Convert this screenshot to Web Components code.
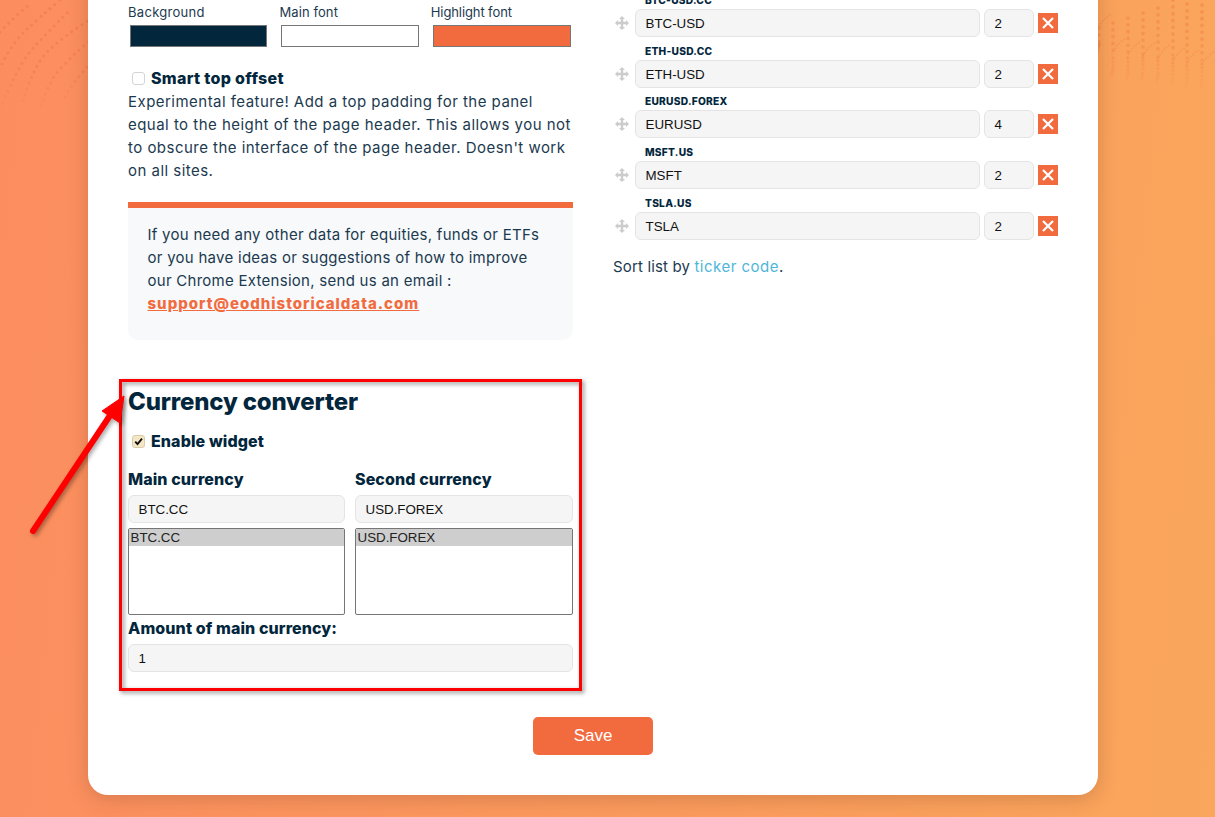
<!DOCTYPE html>
<html lang="en"><head><meta charset="utf-8"><title>Settings</title>
<style>
html,body{margin:0;height:817px;overflow:hidden}
body{font-family:Inter,"Liberation Sans",sans-serif;color:#02263c}
</style></head><body>
<x-page>
  <x-card>
    <x-columns>
      <div slot="left">
        <x-colors></x-colors>
        <x-check>Smart top offset</x-check>
        <x-text><span>Experimental feature! Add a top padding for the panel</span><span>equal to the height of the page header. This allows you not</span><span>to obscure the interface of the page header. Doesn't work</span><span>on all sites.</span></x-text>
        <x-notice></x-notice>
        <x-converter></x-converter>
      </div>
      <div slot="right">
        <x-ticker code="BTC-USD.CC" name="BTC-USD" dec="2"></x-ticker>
        <x-ticker code="ETH-USD.CC" name="ETH-USD" dec="2"></x-ticker>
        <x-ticker code="EURUSD.FOREX" name="EURUSD" dec="4"></x-ticker>
        <x-ticker code="MSFT.US" name="MSFT" dec="2"></x-ticker>
        <x-ticker code="TSLA.US" name="TSLA" dec="2"></x-ticker>
        <x-sort></x-sort>
      </div>
    </x-columns>
    <x-save>Save</x-save>
  </x-card>
</x-page>
<script>
const FONT='Inter,"Liberation Sans",sans-serif';
function def(name,html){
  customElements.define(name,class extends HTMLElement{
    constructor(){super();this.attachShadow({mode:'open'});if(typeof html!=='function')this.shadowRoot.innerHTML=html;}
    connectedCallback(){
      if(typeof html==='function'&&!this._d){this._d=1;this.shadowRoot.innerHTML=html(this);}
    }
  });
}
function rightDeco(){
  const cols=[[1,28,52],[15,23,77],[30,18,80],[45,13,81],[60,8,83],[75,0,86],[89,4,88],[104,5,90]];
  let s='';
  cols.forEach(([x,t,b])=>{
    const m=Math.round(t+(b-t)*.62);
    s+=`<path d="M${x} ${t}V${m}" stroke-dasharray="0.01 6.8" stroke-linecap="round" stroke-width="3.7"/>`;
    s+=`<path d="M${x} ${m+2}V${b-10}" stroke-dasharray="0.01 3.9" stroke-linecap="round" stroke-width="3.3"/>`;
    s+=`<path d="M${x} ${b-9}L${x-1.5} ${b}" stroke-width="3"/>`;
    s+=`<path d="M${x-1} ${b-22}Q${x+2} ${b-32} ${x+12} ${b-38}" stroke-dasharray="1.6 1.6" stroke-width="1.6"/>`;
  });
  return s;
}
const leftDeco=['M0 32Q14 17 30 4','M2 64Q13 42 26 30T60 0','M0 108L10 87Q22 60 34 47Q45 35 70 10','M23 101Q32 70 46 53Q65 35 89 20','M41 106Q50 78 63 66Q78 50 90 41','M65 97Q73 82 90 64']
  .map(d=>`<path d="${d}" stroke-dasharray="0.01 6.2" stroke-linecap="round" stroke-width="3"/>`).join('');
def('x-page',`<style>
:host{display:block;position:relative;height:817px;overflow:hidden;background:linear-gradient(96deg,#fc8d5f 0%,#faa65c 100%)}
.wrap{padding-left:88px;width:1010px;margin-top:-40px;position:relative}
.deco{position:absolute;top:0;pointer-events:none;fill:none}
.l{left:0}.r{left:1098px}
</style>
<svg class="deco l" width="88" height="140" viewBox="0 0 88 140"><defs><linearGradient id="lg" gradientUnits="userSpaceOnUse" x1="0" y1="20" x2="0" y2="115"><stop offset="0" stop-color="#ee6f42" stop-opacity=".42"/><stop offset=".55" stop-color="#ee6f42" stop-opacity=".36"/><stop offset="1" stop-color="#ee6f42" stop-opacity="0"/></linearGradient></defs><g stroke="url(#lg)">${leftDeco}</g></svg>
<svg class="deco r" width="117" height="100" viewBox="0 0 117 100"><defs><linearGradient id="rg" gradientUnits="userSpaceOnUse" x1="0" y1="0" x2="0" y2="92"><stop offset="0" stop-color="#f08048" stop-opacity=".55"/><stop offset=".55" stop-color="#f08048" stop-opacity=".42"/><stop offset="1" stop-color="#f08048" stop-opacity="0"/></linearGradient></defs><g stroke="url(#rg)">${rightDeco()}</g></svg>
<div class="wrap"><slot></slot></div>`);
def('x-card',`<style>
:host{display:block;background:#fff;border-radius:0 0 20px 20px;padding:40px;box-shadow:0 4px 20px rgba(90,40,20,.22);position:relative}
</style><slot></slot>`);
def('x-columns',`<style>
:host{display:grid;grid-template-columns:445px 445px;column-gap:40px;align-items:start}
::slotted([slot=right]){margin-top:-10px}
</style><slot name="left"></slot><slot name="right"></slot>`);
def('x-colors',`<style>
:host{display:grid;grid-template-columns:repeat(3,141.4px);column-gap:10px;font:13px/25px ${FONT};color:#1c3a4f;letter-spacing:.1px}
div{height:47px}
.s{display:block;height:22px;margin:0 0 0 2px;box-sizing:border-box;border:1px solid #767676;width:138px}
.t{display:block;height:25px}
</style>
<div><span class="t" style="letter-spacing:.3px">Background</span><span class="s" style="background:#02263c;width:137px"></span></div>
<div><span class="t">Main font</span><span class="s" style="background:#fff"></span></div>
<div><span class="t" style="letter-spacing:-.1px">Highlight font</span><span class="s" style="background:#f26b3f"></span></div>`);
def('x-check',el=>{const on=el.hasAttribute('checked');return `<style>
:host{display:flex;align-items:center;height:23px;font:800 16px/23px ${FONT};color:#02263c;letter-spacing:${on?'.1px':'.3px'};margin-top:${on?'0':'20px'}}
.b{width:13px;height:13px;box-sizing:border-box;margin:0 6px 0 4px;border-radius:3px;border:1px solid #d4d4d4;background:#fff;display:flex;flex:none}
.on{background:#f3e7c5;border-color:#d9ccaa}
svg{display:block}
</style><span class="b ${on?'on':''}">${on?'<svg width="11" height="11" viewBox="0 0 11 11"><path d="M2.2 5.6 4.5 8 9 2.6" fill="none" stroke="#111" stroke-width="1.9"/></svg>':''}</span><slot></slot>`});
def('x-text',`<style>
:host{display:block;font:400 15px/23px ${FONT};color:#1c3a4f;letter-spacing:.47px;margin-bottom:0;white-space:nowrap}
::slotted(span){display:block}
</style><slot></slot>`);
def('x-notice',`<style>
:host{display:block;margin-top:20px;border-top:6px solid #f26b3f;background:#f7f9fb;border-radius:0 0 10px 10px;padding:15px 20px 25px 19.5px;font:400 15px/23px ${FONT};color:#1c3a4f;letter-spacing:.27px}
a{display:block;color:#f26b3f;font-weight:800;text-decoration:underline;letter-spacing:1px}
</style>If you need any other data for equities, funds or ETFs or you have ideas or suggestions of how to improve our Chrome Extension, send us an email :<a href="#">support@eodhistoricaldata.com</a>`);
def('x-field',`<style>
:host{display:block;height:28px;box-sizing:border-box;border:1px solid #e4e4e4;border-radius:6px;background:#f5f5f5;padding:0 9.5px;font:13.33px/27px "Liberation Sans",sans-serif;color:#111}
</style><slot></slot>`);
def('x-listbox',`<style>
:host{display:block;height:87px;box-sizing:border-box;border:1px solid #767676;border-radius:2px;background:#fff;font:13.33px/17px "Liberation Sans",sans-serif;color:#222;margin-top:5px;overflow:hidden}
div{background:#cecece;padding:0 1.5px;height:17px}
</style><div><slot></slot></div>`);
def('x-converter',`<style>
:host{display:block;position:relative;margin-top:44px}
h2{margin:0;font:800 24px/36px ${FONT};color:#02263c;letter-spacing:-.18px}
x-check{margin-top:9.5px}
.g{display:grid;grid-template-columns:217px 218px;column-gap:10px;margin-top:15px}
.lab{font:800 16px/23px ${FONT};color:#02263c;height:23px;margin-bottom:4.5px;letter-spacing:.1px}
.amt{margin-top:1.5px}
.box{position:absolute;left:-9px;right:-9px;top:-5px;bottom:-19px;border:3px solid #f00;filter:drop-shadow(2px 2px 2px rgba(0,0,0,.45));pointer-events:none}
svg{position:absolute;left:-100px;top:8px;overflow:visible;filter:drop-shadow(2px 2px 2px rgba(0,0,0,.35))}
</style>
<h2>Currency converter</h2>
<x-check checked>Enable widget</x-check>
<div class="g">
  <div><div class="lab">Main currency</div><x-field>BTC.CC</x-field><x-listbox>BTC.CC</x-listbox></div>
  <div><div class="lab">Second currency</div><x-field>USD.FOREX</x-field><x-listbox>USD.FOREX</x-listbox></div>
</div>
<div class="lab amt">Amount of main currency:</div>
<x-field>1</x-field>
<div class="box"></div>
<svg width="100" height="140" viewBox="28 392 100 140"><path d="M33 531 111 414" stroke="#f00" stroke-width="6" stroke-linecap="round" fill="none"/><path d="M124 396 102 411 120 423Z" fill="#f00" stroke="#f00" stroke-linejoin="round"/></svg>`);
def('x-ticker',el=>`<style>
:host{display:block;margin-bottom:3.7px}
.c{font:800 10.2px/20px ${FONT};letter-spacing:.25px;color:#02263c;padding-left:32px;margin-bottom:1px;height:18px}
.r{display:grid;grid-template-columns:18px 345px 50px 20px;column-gap:4px;align-items:center}
.d{width:20px;height:20px;background:#f26b3f;display:block}
svg{display:block}
.m{margin-left:2px}
</style>
<div class="c">${el.getAttribute('code')}</div>
<div class="r">
<svg class="m" width="14" height="14" viewBox="0 0 14 14"><path fill="#ccc" d="M7 0 10 3H8.2V5.8H11V4L14 7 11 10V8.2H8.2V11H10L7 14 4 11H5.8V8.2H3V10L0 7 3 4V5.8H5.8V3H4Z"/></svg>
<x-field>${el.getAttribute('name')}</x-field>
<x-field>${el.getAttribute('dec')}</x-field>
<span class="d"><svg width="20" height="20" viewBox="0 0 20 20"><path d="M5 5 15 15M15 5 5 15" stroke="#fff" stroke-width="2.2"/></svg></span>
</div>`);
def('x-sort',`<style>
:host{display:block;margin-top:15px;font:400 15px/23px ${FONT};color:#1c3a4f;letter-spacing:.15px}
a{color:#4fb6d8;text-decoration:none;letter-spacing:.5px}
</style>Sort list by <a href="#">ticker code</a>.`);
def('x-save',`<style>
:host{display:block;width:120px;height:38px;margin:45px auto 0;background:#f26b3f;border-radius:5px;color:#fff;text-align:center;font:17px/38px "Liberation Sans",sans-serif}
</style><slot></slot>`);
</script>
</body></html>
